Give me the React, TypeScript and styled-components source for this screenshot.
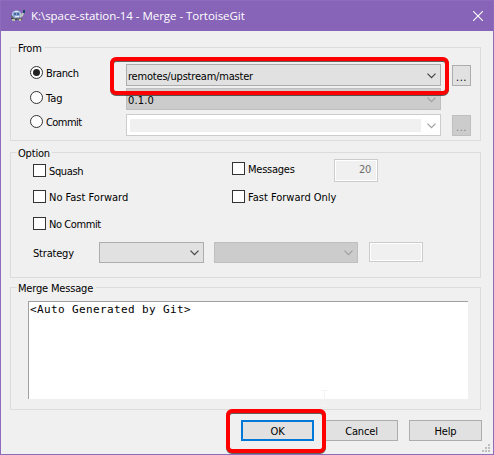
import { ReactNode } from "react";
import styled, { createGlobalStyle, css } from "styled-components";

const GlobalStyle = createGlobalStyle`
    * {
        box-sizing: border-box;
    }

    body {
        margin: 0;
        overflow: hidden;
        background: #f0f0f0;
    }
`;

const Dialog = styled.div`
    position: relative;
    display: flex;
    flex-direction: column;
    width: 494px;
    height: 455px;
    border: 1px solid #8d6dbb;
    background: #f0f0f0;
    color: #000;
    font: 11px/13px "DejaVu Sans Condensed", "DejaVu Sans", sans-serif;
    white-space: nowrap;
`;

const TitleBar = styled.header`
    display: flex;
    align-items: center;
    flex: none;
    height: 30px;
    padding: 0 10px 0 9px;
    background: #8764b8;
    color: #fff;
`;

const Title = styled.h1`
    flex: 1;
    margin: 0 0 0 5px;
    font: 400 11.5px/16px "Open Sans", "Noto Sans", sans-serif;
    letter-spacing: -0.04px;
`;

const Content = styled.main`
    display: flex;
    flex-direction: column;
    padding: 16px 11px 0 9px;
`;

const Group = styled.section<{ $height: number; $gap?: number }>`
    display: flex;
    flex-direction: column;
    width: 471px;
    height: ${({ $height }) => $height}px;
    margin-top: ${({ $gap = 0 }) => $gap}px;
    border: 1px solid #dcdcdc;
`;

const Legend = styled.h2<{ $width: number }>`
    flex: none;
    width: ${({ $width }) => $width}px;
    height: 14px;
    margin: -8px 0 0 6px;
    padding-left: 1px;
    background: #f0f0f0;
    font: inherit;
    line-height: 17px;
    letter-spacing: -0.18px;
`;

const Text = styled.span<{ $track?: number }>`
    letter-spacing: ${({ $track = 0 }) => $track}px;
`;

const Row = styled.div<{ $top: number; $left: number; $height?: number }>`
    display: flex;
    align-items: flex-start;
    flex: none;
    height: ${({ $height = 22 }) => $height}px;
    margin-top: ${({ $top }) => $top}px;
    padding-left: ${({ $left }) => $left}px;
`;

const ChoiceLabel = styled.label<{ $width: number; $drop: number }>`
    display: flex;
    flex: none;
    width: ${({ $width }) => $width}px;
    height: 13px;
    margin-top: ${({ $drop }) => $drop}px;
    line-height: 15px;
`;

const RadioMark = styled.span<{ $checked?: boolean }>`
    display: grid;
    place-items: center;
    width: 13px;
    height: 13px;
    margin-right: 3px;
    border: 1px solid #333;
    border-radius: 50%;
    background: #fff;

    ${({ $checked }) =>
        $checked &&
        css`
            &::after {
                content: "";
                width: 7px;
                height: 7px;
                border-radius: 50%;
                background: #222;
            }
        `}
`;

const CheckMark = styled.span`
    width: 13px;
    height: 13px;
    margin-right: 3px;
    border: 1px solid #333;
    background: #fff;
`;

type BoxProps = { $width: number; $height?: number; $disabled?: boolean };

const SelectBox = styled.div<BoxProps>`
    display: flex;
    align-items: center;
    justify-content: space-between;
    flex: none;
    width: ${({ $width }) => $width}px;
    height: ${({ $height = 22 }) => $height}px;
    padding: 1px 4px 0 1px;
    border: 1px solid ${({ $disabled }) => ($disabled ? "#bfbfbf" : "#adadad")};
    background: ${({ $disabled }) => ($disabled ? "#ccc" : "#e1e1e1")};

    ${Text} {
        margin-top: 2px;
    }
`;

const EditableSelect = styled(SelectBox)`
    padding-left: 3px;
    border-color: #ccc;
    background: #fff;
`;

const EditableFill = styled.span`
    width: 291px;
    height: 13px;
    background: #f0f0f0;
`;

const BrowseButton = styled.button<{ $off?: boolean }>`
    width: 19px;
    height: 21px;
    margin: 1px 0 0 11px;
    padding: 3px 0 0;
    border: 1px solid ${({ $off }) => ($off ? "#bfbfbf" : "#adadad")};
    background: ${({ $off }) => ($off ? "#ccc" : "#e1e1e1")};
    color: ${({ $off }) => ($off ? "#838383" : "#000")};
    font: inherit;
    letter-spacing: 0.5px;
`;

const NumberBox = styled.div<{ $width: number; $height: number; $left: number }>`
    flex: none;
    width: ${({ $width }) => $width}px;
    height: ${({ $height }) => $height}px;
    margin-left: ${({ $left }) => $left}px;
    padding: 2px 6px;
    border: 1px solid #ccc;
    box-shadow: inset 0 0 0 1px #fff;
    color: #6d6d6d;
    line-height: 16px;
    letter-spacing: -0.3px;
    text-align: right;
`;

const StrategyLabel = styled.span`
    width: 66px;
    line-height: 23px;
    letter-spacing: -0.2px;
`;

const SelectGap = styled.span`
    width: 10px;
`;

const MessageBox = styled.div`
    width: 440px;
    height: 98px;
    margin: 0 0 0 17px;
    padding: 1px 0 0 1px;
    border-top: 1px solid #a0a0a0;
    border-left: 1px solid #a0a0a0;
    background: #fff;
    font: 11px/14px "DejaVu Sans Mono", monospace;
    letter-spacing: 0.38px;
`;

const Footer = styled.footer`
    display: flex;
    justify-content: flex-end;
    gap: 11px;
    margin-top: 10px;
`;

const Button = styled.button<{ $primary?: boolean }>`
    width: 73px;
    height: 21px;
    padding: 2px 0 0;
    border: ${({ $primary }) => ($primary ? "2px solid #0078d7" : "1px solid #adadad")};
    background: #e1e1e1;
    color: #000;
    font: inherit;
    letter-spacing: -0.15px;
`;

const Highlight = styled.div<{ $x: number; $y: number; $w: number; $h: number }>`
    position: absolute;
    left: ${({ $x }) => $x - 1}px;
    top: ${({ $y }) => $y - 1}px;
    width: ${({ $w }) => $w}px;
    height: ${({ $h }) => $h}px;
    border: 4px solid #f00;
    border-radius: 6px;
    filter: drop-shadow(0 1px 0.5px rgba(0, 0, 0, 0.6));
    pointer-events: none;
`;

const Grip = styled.svg`
    position: absolute;
    right: 3px;
    bottom: 2px;
`;

const TextCursor = styled.svg`
    position: absolute;
    left: 320px;
    top: 389px;
`;

const Turtle = () => (
    <svg width="16" height="16" viewBox="0 0 16 16">
        <path d="M1 8 L3 6 L4 10 L12 10 L13 8 L12 12 L2 12 Z" fill="#67686a" />
        <ellipse cx="6.5" cy="6.3" rx="4.5" ry="3.8" fill="#b4cbe8" />
        <path d="M3 5 L6 3 L10 5 L10 8 L7 10 L3 9 Z" fill="#8aa8d4" />
        <path d="M4 5 h2 v2 h-2z M7 5 h2 v2 h-2z" fill="#4c689a" />
        <path d="M5 3 h3 v1 h-3z M5 8 h4 v1 h-4z" fill="#e0ecf8" />
        <path d="M10 8 L12 5 L14 5 L13 8 L10 10 Z" fill="#bdc6bd" />
        <path d="M13 2 h2 v3 h-2z" fill="#164967" />
        <path d="M2 11 h3 v2 h-3z M9 11 h2 v2 h-2z" fill="#b9bba5" />
        <path d="M1 10 h2 v1 h-2z M5 11 h2 v1 h-2z" fill="#34465f" />
    </svg>
);

const CloseIcon = () => (
    <svg width="10" height="10" viewBox="0 0 10 10">
        <path d="M0 0 L10 10 M10 0 L0 10" stroke="#fff" strokeWidth="1.1" />
    </svg>
);

const Chevron = ({ color = "#444" }: { color?: string }) => (
    <svg width="9" height="6" viewBox="0 0 9 6">
        <path d="M0.5 0.7 L4.5 4.7 L8.5 0.7" fill="none" stroke={color} strokeWidth="1.2" />
    </svg>
);

type ChoiceProps = {
    kind?: "radio" | "check";
    width: number;
    drop?: number;
    track?: number;
    checked?: boolean;
    children: ReactNode;
};

const Choice = ({
    kind = "check",
    width,
    drop = 0,
    track,
    checked,
    children,
}: ChoiceProps) => (
    <ChoiceLabel $width={width} $drop={drop}>
        {kind === "radio" ? <RadioMark $checked={checked} /> : <CheckMark />}
        <Text $track={track}>{children}</Text>
    </ChoiceLabel>
);

const App = () => (
    <>
        <GlobalStyle />
        <Dialog>
            <TitleBar>
                <Turtle />
                <Title>K:\space-station-14 - Merge - TortoiseGit</Title>
                <CloseIcon />
            </TitleBar>
            <Content>
                <Group $height={94}>
                    <Legend $width={28}>From</Legend>
                    <Row $top={10} $left={19}>
                        <Choice kind="radio" width={96} drop={2} track={-0.4} checked>
                            Branch
                        </Choice>
                        <SelectBox $width={315}>
                            <Text $track={-0.2}>remotes/upstream/master</Text>
                            <Chevron />
                        </SelectBox>
                        <BrowseButton>...</BrowseButton>
                    </Row>
                    <Row $top={2} $left={19}>
                        <Choice kind="radio" width={96} drop={3}>
                            Tag
                        </Choice>
                        <SelectBox $width={315} $disabled>
                            <Text $track={0.15}>0.1.0</Text>
                            <Chevron color="#a0a0a0" />
                        </SelectBox>
                    </Row>
                    <Row $top={4} $left={19}>
                        <Choice kind="radio" width={96} drop={1} track={-0.55}>
                            Commit
                        </Choice>
                        <EditableSelect $width={315}>
                            <EditableFill />
                            <Chevron color="#a0a0a0" />
                        </EditableSelect>
                        <BrowseButton $off>...</BrowseButton>
                    </Row>
                </Group>
                <Group $height={126} $gap={11}>
                    <Legend $width={35}>Option</Legend>
                    <Row $top={0} $left={22} $height={23}>
                        <Choice width={199} drop={5} track={-0.35}>
                            Squash
                        </Choice>
                        <Choice width={92} drop={3} track={-0.25}>
                            Messages
                        </Choice>
                        <NumberBox $width={44} $height={23} $left={10}>
                            20
                        </NumberBox>
                    </Row>
                    <Row $top={8} $left={22} $height={13}>
                        <Choice width={199}>No Fast Forward</Choice>
                        <Choice width={120}>Fast Forward Only</Choice>
                    </Row>
                    <Row $top={14} $left={22} $height={13}>
                        <Choice width={199} track={-0.42}>
                            No Commit
                        </Choice>
                    </Row>
                    <Row $top={12} $left={22} $height={21}>
                        <StrategyLabel>Strategy</StrategyLabel>
                        <SelectBox $width={105} $height={21}>
                            <span />
                            <Chevron />
                        </SelectBox>
                        <SelectGap />
                        <SelectBox $width={144} $height={21} $disabled>
                            <span />
                            <Chevron color="#a0a0a0" />
                        </SelectBox>
                        <NumberBox $width={54} $height={20} $left={11} />
                    </Row>
                </Group>
                <Group $height={123} $gap={9}>
                    <Legend $width={79}>Merge Message</Legend>
                    <Row $top={7} $left={0} $height={98}>
                        <MessageBox>&lt;Auto Generated by Git&gt;</MessageBox>
                    </Row>
                </Group>
                <Footer>
                    <Button $primary>OK</Button>
                    <Button>Cancel</Button>
                    <Button>Help</Button>
                </Footer>
            </Content>
            <Highlight $x={110} $y={57} $w={339} $h={38} />
            <Highlight $x={226} $y={409} $w={100} $h={44} />
            <TextCursor width="7" height="17" viewBox="0 0 7 17">
                <path d="M0 .5 H7 M3.5 1 V15 M0 15.5 H7" stroke="#f4f4f4" />
            </TextCursor>
            <Grip width="8" height="8" viewBox="0 0 8 8">
                <path
                    d="M6 0h2v2h-2z M3 3h2v2h-2z M6 3h2v2h-2z M0 6h2v2h-2z M3 6h2v2h-2z M6 6h2v2h-2z"
                    fill="#bfbfbf"
                />
            </Grip>
        </Dialog>
    </>
);

export default App;
